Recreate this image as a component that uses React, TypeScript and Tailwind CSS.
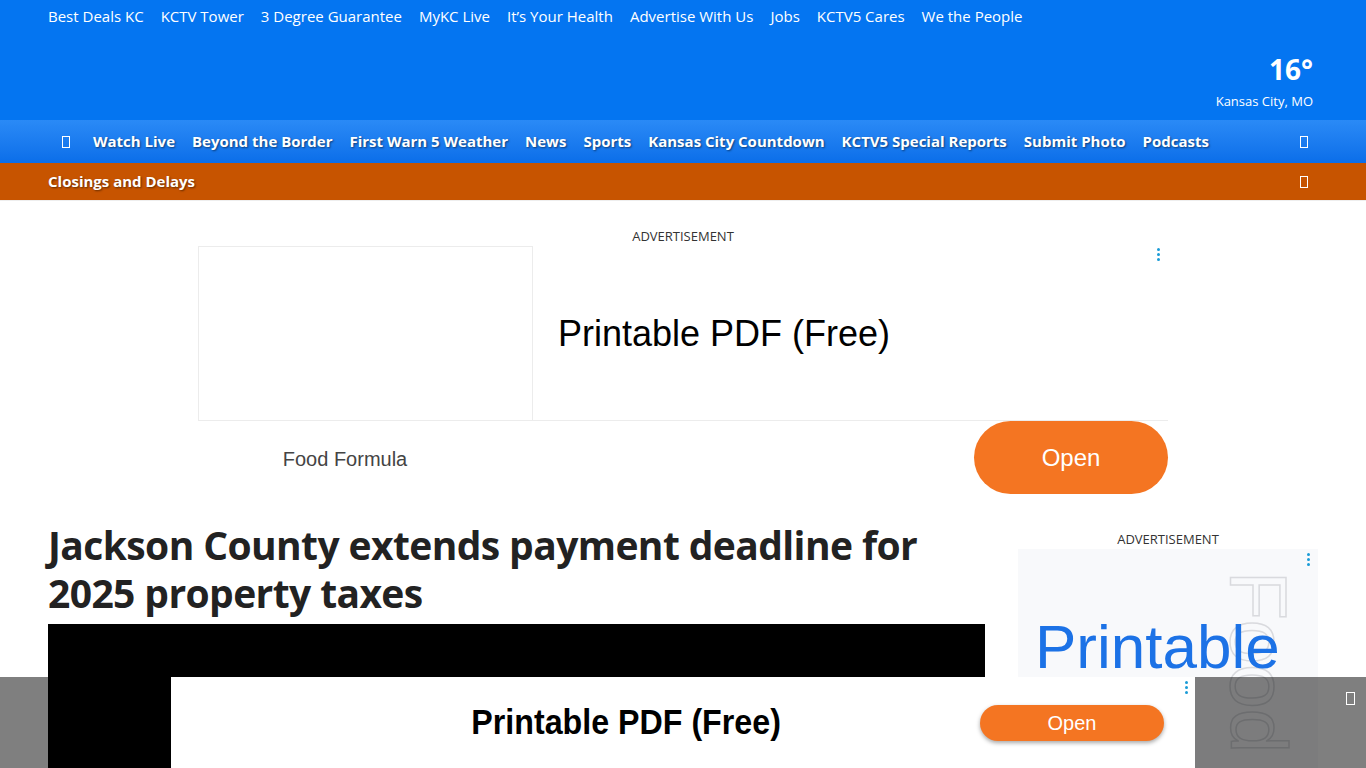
import React from 'react';

const topLinks = [
  'Best Deals KC',
  'KCTV Tower',
  '3 Degree Guarantee',
  'MyKC Live',
  'It’s Your Health',
  'Advertise With Us',
  'Jobs',
  'KCTV5 Cares',
  'We the People',
];

const mainLinks = [
  'Watch Live',
  'Beyond the Border',
  'First Warn 5 Weather',
  'News',
  'Sports',
  'Kansas City Countdown',
  'KCTV5 Special Reports',
  'Submit Photo',
  'Podcasts',
];

// missing-glyph box, the way the icon font shows up without its font
const Tofu = ({ className = '' }: { className?: string }) => (
  <span className={`inline-block w-[8px] h-[12px] border border-white ${className}`} />
);

const Kebab = ({ className = '' }: { className?: string }) => (
  <span className={`flex flex-col gap-[2px] ${className}`}>
    <span className="w-[3px] h-[3px] rounded-full bg-[#1a9bd7]" />
    <span className="w-[3px] h-[3px] rounded-full bg-[#1a9bd7]" />
    <span className="w-[3px] h-[3px] rounded-full bg-[#1a9bd7]" />
  </span>
);

const App: React.FC = () => {
  return (
    <div className="min-h-[768px] bg-white font-['Open_Sans',sans-serif] text-[#222]">
      {/* header */}
      <header className="bg-[#0475f1] h-[120px] px-12 flex flex-col">
        <nav className="flex items-center gap-[17px] h-[33px] text-[15px] text-white">
          {topLinks.map((l) => (
            <a key={l} href="#" className="whitespace-nowrap">{l}</a>
          ))}
        </nav>
        <div className="flex-1 flex flex-col items-end pt-[18px] pr-[5px]">
          <div className="text-[28px] font-bold text-white leading-[36px]">16°</div>
          <div className="text-[13px] text-white leading-[18px] mt-[5px]">Kansas City, MO</div>
        </div>
      </header>

      <div className="h-[43px] bg-gradient-to-b from-[#2a8af6] to-[#0a6ee9] px-12 flex items-center">
        <div className="flex items-center gap-[17px] pl-[14px] text-[15px] font-bold text-white [text-shadow:1px_1px_2px_rgba(0,0,0,0.5)]">
          <Tofu className="mr-[6px]" />
          {mainLinks.map((l) => (
            <a key={l} href="#" className="whitespace-nowrap">{l}</a>
          ))}
        </div>
        <Tofu className="ml-auto mr-[10px]" />
      </div>

      <div className="h-[38px] bg-[#c75400] px-12 flex items-center border-b border-[#eeeeee]">
        <span className="text-[15px] font-bold text-white [text-shadow:1px_1px_2px_rgba(0,0,0,0.5)]">Closings and Delays</span>
        <Tofu className="ml-auto mr-[10px]" />
      </div>

      {/* leaderboard ad */}
      <div className="flex flex-col items-center pt-[27px]">
        <div className="text-[13px] text-[#333] leading-[16px] uppercase">Advertisement</div>
        <div className="mt-[2px] w-[970px] h-[250px] relative font-['Liberation_Sans',Arial,sans-serif]">
          <div className="flex h-[175px]">
            <div className="w-[335px] h-full border border-[#ececec]" />
            <div className="flex-1 border-b border-[#ececec] flex items-center pl-[25px] pt-[2px] text-[36px] text-black">
              Printable PDF (Free)
            </div>
          </div>
          <div className="flex items-center h-[75px]">
            <div className="w-[300px] text-center text-[20px] text-[#444] -ml-[3px]">Food Formula</div>
            <button className="ml-auto w-[194px] h-[73px] rounded-full bg-[#f47522] text-white text-[24px] -mt-[2px]">Open</button>
          </div>
          <Kebab className="absolute top-[2px] right-[8px]" />
        </div>
      </div>

      {/* article */}
      <div className="px-12 pt-[25px] flex gap-[33px]">
        <div className="flex-1 min-w-0">
          <h1 className="text-[39px] font-bold leading-[48px] text-[#222] tracking-[-0.6px]">
            Jackson County extends payment deadline for 2025 property taxes
          </h1>
          <div className="mt-[7px] h-[528px] bg-black" />
        </div>
        <aside className="w-[300px] shrink-0 pt-[10px]">
          <div className="text-[13px] text-[#333] leading-[16px] text-center uppercase">Advertisement</div>
          <div className="mt-[2px] h-[600px] bg-[#f8f9fb] relative overflow-hidden font-['Liberation_Sans',Arial,sans-serif]">
            <div aria-hidden="true" className="absolute left-[280px] top-[22px] rotate-90 origin-top-left text-[80px] leading-[80px] text-transparent [-webkit-text-stroke:1.5px_#d9dade] whitespace-nowrap select-none">
              Food
            </div>
            <div className="relative pt-[60px] pl-[17px] text-[62px] leading-[76px] text-[#1c72e6]">Printable</div>
            <Kebab className="absolute top-[4px] right-[8px]" />
          </div>
        </aside>
      </div>

      {/* sticky bottom ad */}
      <div className="fixed left-0 right-0 bottom-0 h-[91px] bg-black/50 flex">
        <div className="ml-[171px] w-[1024px] h-full bg-white relative flex items-center font-['Liberation_Sans',Arial,sans-serif]">
          <div className="flex-1 text-center text-[35px] font-bold text-black pl-[110px] scale-x-[0.92]">Printable PDF (Free)</div>
          <button className="mr-[31px] w-[184px] h-[36px] rounded-full bg-[#f47522] text-white text-[20px] shadow-[0_2px_4px_rgba(0,0,0,0.35)]">Open</button>
          <Kebab className="absolute top-[4px] right-[7px]" />
        </div>
        <div className="ml-auto mr-[11px] mt-[10px]">
          <span className="inline-block w-[9px] h-[13px] border border-white" />
        </div>
      </div>
    </div>
  );
};

export default App;
